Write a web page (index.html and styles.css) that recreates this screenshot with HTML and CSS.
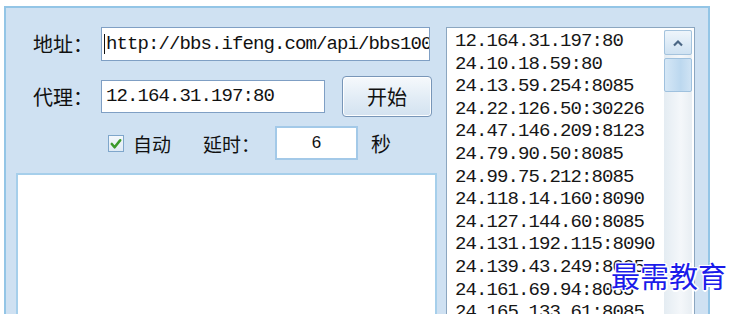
FILE: index.html
```html
<!DOCTYPE html>
<html lang="zh-CN">
<head>
  <meta charset="UTF-8" />
  <title>代理测试</title>
  <link rel="stylesheet" href="styles.css">
</head>
<body>

  <div class="frame">
    <!-- 左侧：设置 -->
    <div class="left-col">
      <div class="row row-url">
        <span class="label">地址：</span>
        <div class="field field-url"><span class="caret"></span>http://bbs.ifeng.com/api/bbs100.php</div>
      </div>

      <div class="row row-proxy">
        <span class="label">代理：</span>
        <div class="field field-proxy">12.164.31.197:80</div>
        <button class="btn-start">开始</button>
      </div>

      <div class="row row-auto">
        <span class="check">
          <svg width="15" height="16" viewBox="0 0 15 16">
            <polyline points="3,8 6,11.5 12,4" fill="none" stroke="#3c9a2c" stroke-width="2.8" stroke-linecap="round" stroke-linejoin="round"/>
          </svg>
        </span>
        <span class="check-text">自动</span>
        <span class="delay-label">延时：</span>
        <div class="field field-delay">6</div>
        <span class="unit">秒</span>
      </div>

      <div class="log-box"></div>
    </div>

    <!-- 右侧：代理列表 -->
    <div class="list-box">
      <ul class="proxy-list">
        <li>12.164.31.197:80</li>
        <li>24.10.18.59:80</li>
        <li>24.13.59.254:8085</li>
        <li>24.22.126.50:30226</li>
        <li>24.47.146.209:8123</li>
        <li>24.79.90.50:8085</li>
        <li>24.99.75.212:8085</li>
        <li>24.118.14.160:8090</li>
        <li>24.127.144.60:8085</li>
        <li>24.131.192.115:8090</li>
        <li>24.139.43.249:8085</li>
        <li>24.161.69.94:8085</li>
        <li>24.165.133.61:8085</li>
      </ul>
      <div class="scrollbar">
        <div class="sb-up">
          <svg width="12" height="8" viewBox="0 0 12 8">
            <polyline points="2,6.5 6,2.5 10,6.5" fill="none" stroke="#4a6684" stroke-width="2.2"/>
          </svg>
        </div>
        <div class="sb-thumb"></div>
      </div>
    </div>

    <div class="watermark">最需教育</div>
  </div>

</body>
</html>
```

FILE: styles.css
```css
* { box-sizing: border-box; margin: 0; padding: 0; }

html, body {
  background: #fff;
  height: 100%;
  overflow: hidden;
}

body {
  font-family: "Noto Sans CJK SC", "Noto Sans", sans-serif;
  color: #111;
}

.frame {
  position: relative;
  margin: 6px 0 0 4px;
  width: 706px;
  height: 308px;
  border: 2px solid #93c5e6;
  border-bottom: none;
  background-color: #cfe1f2;
  display: flex;
  gap: 9px;
  padding: 19px 13px 0 10px;
}

.left-col {
  width: 421px;
  display: flex;
  flex-direction: column;
  overflow: hidden;
}

.row {
  display: flex;
  align-items: center;
  flex: none;
}

.label {
  width: 68px;
  padding-left: 17px;
  box-sizing: content-box;
  font-size: 20px;
  line-height: 24px;
  white-space: nowrap;
}

.field {
  background: #fff;
  border: 1px solid #7f9fc4;
  font-family: "Liberation Mono", monospace;
  font-size: 19px;
  letter-spacing: -0.9px;
  white-space: nowrap;
  overflow: hidden;
  color: #111;
}

.field-url {
  width: 329px;
  height: 34px;
  line-height: 32px;
  padding-left: 2px;
  display: flex;
  align-items: center;
}

.caret {
  display: inline-block;
  width: 1px;
  height: 20px;
  background: #111;
  margin-right: 1px;
  flex: none;
}

.row-proxy {
  margin-top: 15px;
  height: 41px;
}

.field-proxy {
  width: 224px;
  height: 33px;
  line-height: 31px;
  padding-left: 4px;
}

.btn-start {
  margin-left: 17px;
  width: 90px;
  height: 41px;
  border: 1px solid #7896b8;
  border-radius: 4px;
  background: linear-gradient(#f6f9fc, #e3edf6 50%, #d3e2f0);
  box-shadow: inset 0 0 0 1px #fdfeff;
  font-family: "Noto Sans CJK SC", sans-serif;
  font-size: 20px;
  color: #111;
}

.row-auto {
  margin-top: 9px;
  height: 34px;
  padding-left: 92px;
}

.check {
  width: 16px;
  height: 17px;
  border: 1px solid #7fa6cb;
  background: linear-gradient(#f4f8fc, #dfeaf5);
  display: flex;
}

.check svg { display: block; }

.check-text {
  margin-left: 9px;
  font-size: 19px;
}

.delay-label {
  margin-left: 32px;
  font-size: 19px;
}

.field-delay {
  margin-left: 15px;
  width: 83px;
  height: 34px;
  border: 2px solid #a3c9e8;
  text-align: center;
  font-family: "Liberation Sans", sans-serif;
  font-size: 17px;
  letter-spacing: 0;
  line-height: 30px;
}

.unit {
  margin-left: 13px;
  font-size: 20px;
}

.log-box {
  margin-top: 13px;
  flex: 1;
  background: #fff;
  border: 2px solid #a6cfeb;
  border-bottom: none;
}

.list-box {
  width: 249px;
  background: #fff;
  border: 1px solid #8ba6c0;
  border-bottom: none;
  display: flex;
  overflow: hidden;
}

.proxy-list {
  list-style: none;
  flex: 1;
  padding: 2px 0 0 8px;
  font-family: "Liberation Mono", monospace;
  font-size: 19px;
  letter-spacing: -0.9px;
  line-height: 22.6px;
  color: #161616;
  white-space: nowrap;
  overflow: hidden;
}

.scrollbar {
  width: 28px;
  margin: 2px 2px 0 0;
  background: linear-gradient(90deg, #e4ecf2, #f4f7fa 60%, #e8eef3);
  display: flex;
  flex-direction: column;
  gap: 3px;
}

.sb-up {
  height: 25px;
  border: 1px solid #a4c3dd;
  border-radius: 2px;
  background: linear-gradient(#eef5fb, #cfe2f2);
  display: flex;
  align-items: center;
  justify-content: center;
}

.sb-thumb {
  height: 34px;
  border: 1px solid #9fc1de;
  border-radius: 2px;
  background: linear-gradient(90deg, #d5e7f6, #bcd8ef 60%, #cfe3f4);
}

.watermark {
  position: absolute;
  left: 605px;
  top: 246px;
  white-space: nowrap;
  font-family: "Noto Sans CJK SC", serif;
  font-size: 29px;
  line-height: 42px;
  letter-spacing: 0;
  color: #1b1bea;
  text-shadow: 1px 1px 0 #fff, -1px -1px 0 #fff, 1px -1px 0 #fff, -1px 1px 0 #fff, 0 2px 0 #fff, 2px 0 0 #fff;
}
```
